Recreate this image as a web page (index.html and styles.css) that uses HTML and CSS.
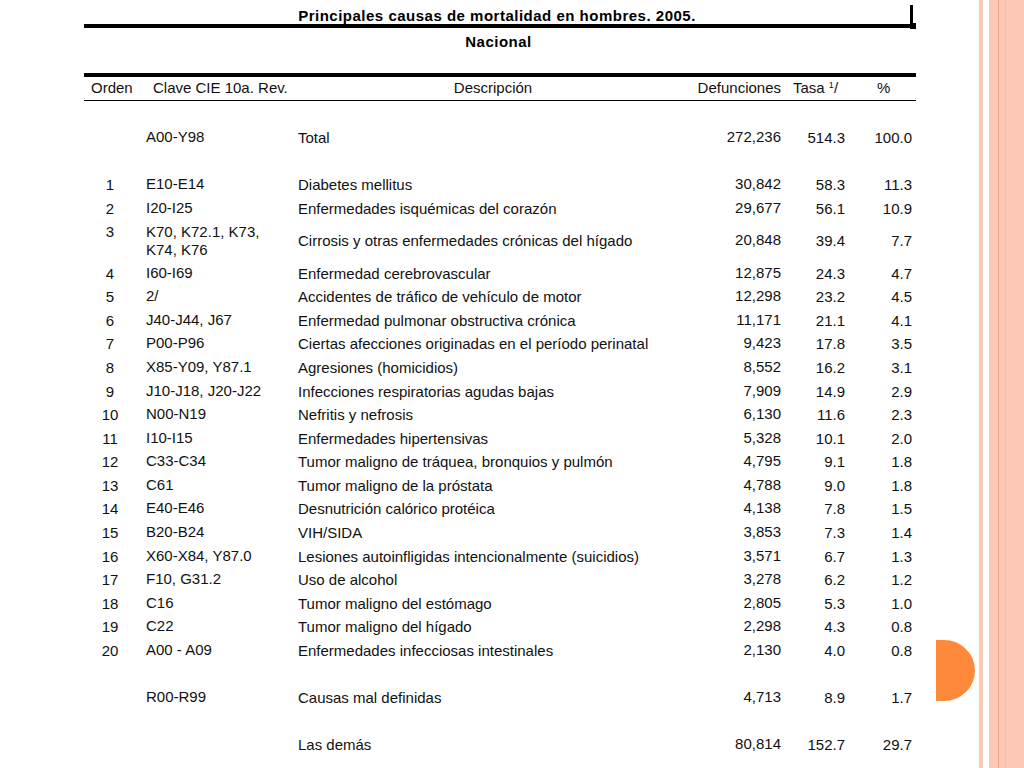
FILE: index.html
```html
<!DOCTYPE html>
<html lang="es">
<head>
<meta charset="utf-8">
<title>Principales causas de mortalidad en hombres. 2005.</title>
<link rel="stylesheet" href="styles.css">
</head>
<body>
<div class="page">
  <div class="sheet">
    <div class="title-bar">
      <div class="title">Principales causas de mortalidad en hombres. 2005.</div>
      <div class="marker"><div class="marker-bar"></div><div class="marker-sq"></div></div>
    </div>
    <div class="subtitle">Nacional</div>
    <div class="head">
      <div class="h-orden">Orden</div>
      <div class="h-clave">Clave CIE 10a. Rev.</div>
      <div class="h-desc">Descripción</div>
      <div class="h-def">Defunciones</div>
      <div class="h-tasa">Tasa <sup>1</sup>/</div>
      <div class="h-pct">%</div>
    </div>
    <div class="body">
      <div class="row"><div class="c-orden"></div><div class="c-clave">A00-Y98</div><div class="c-desc">Total</div><div class="c-def">272,236</div><div class="c-tasa">514.3</div><div class="c-pct">100.0</div></div>
      <div class="gap"></div>
      <div class="row"><div class="c-orden">1</div><div class="c-clave">E10-E14</div><div class="c-desc">Diabetes mellitus</div><div class="c-def">30,842</div><div class="c-tasa">58.3</div><div class="c-pct">11.3</div></div>
      <div class="row"><div class="c-orden">2</div><div class="c-clave">I20-I25</div><div class="c-desc">Enfermedades isquémicas del corazón</div><div class="c-def">29,677</div><div class="c-tasa">56.1</div><div class="c-pct">10.9</div></div>
      <div class="row tall"><div class="c-orden top">3</div><div class="c-clave two">K70, K72.1, K73,<br>K74, K76</div><div class="c-desc">Cirrosis y otras enfermedades crónicas del hígado</div><div class="c-def">20,848</div><div class="c-tasa">39.4</div><div class="c-pct">7.7</div></div>
      <div class="row"><div class="c-orden">4</div><div class="c-clave">I60-I69</div><div class="c-desc">Enfermedad cerebrovascular</div><div class="c-def">12,875</div><div class="c-tasa">24.3</div><div class="c-pct">4.7</div></div>
      <div class="row"><div class="c-orden">5</div><div class="c-clave">2/</div><div class="c-desc">Accidentes de tráfico de vehículo de motor</div><div class="c-def">12,298</div><div class="c-tasa">23.2</div><div class="c-pct">4.5</div></div>
      <div class="row"><div class="c-orden">6</div><div class="c-clave">J40-J44, J67</div><div class="c-desc">Enfermedad pulmonar obstructiva crónica</div><div class="c-def">11,171</div><div class="c-tasa">21.1</div><div class="c-pct">4.1</div></div>
      <div class="row"><div class="c-orden">7</div><div class="c-clave">P00-P96</div><div class="c-desc">Ciertas afecciones originadas en el período perinatal</div><div class="c-def">9,423</div><div class="c-tasa">17.8</div><div class="c-pct">3.5</div></div>
      <div class="row"><div class="c-orden">8</div><div class="c-clave">X85-Y09, Y87.1</div><div class="c-desc">Agresiones (homicidios)</div><div class="c-def">8,552</div><div class="c-tasa">16.2</div><div class="c-pct">3.1</div></div>
      <div class="row"><div class="c-orden">9</div><div class="c-clave">J10-J18, J20-J22</div><div class="c-desc">Infecciones respiratorias agudas bajas</div><div class="c-def">7,909</div><div class="c-tasa">14.9</div><div class="c-pct">2.9</div></div>
      <div class="row"><div class="c-orden">10</div><div class="c-clave">N00-N19</div><div class="c-desc">Nefritis y nefrosis</div><div class="c-def">6,130</div><div class="c-tasa">11.6</div><div class="c-pct">2.3</div></div>
      <div class="row"><div class="c-orden">11</div><div class="c-clave">I10-I15</div><div class="c-desc">Enfermedades hipertensivas</div><div class="c-def">5,328</div><div class="c-tasa">10.1</div><div class="c-pct">2.0</div></div>
      <div class="row"><div class="c-orden">12</div><div class="c-clave">C33-C34</div><div class="c-desc">Tumor maligno de tráquea, bronquios y pulmón</div><div class="c-def">4,795</div><div class="c-tasa">9.1</div><div class="c-pct">1.8</div></div>
      <div class="row"><div class="c-orden">13</div><div class="c-clave">C61</div><div class="c-desc">Tumor maligno de la próstata</div><div class="c-def">4,788</div><div class="c-tasa">9.0</div><div class="c-pct">1.8</div></div>
      <div class="row"><div class="c-orden">14</div><div class="c-clave">E40-E46</div><div class="c-desc">Desnutrición calórico protéica</div><div class="c-def">4,138</div><div class="c-tasa">7.8</div><div class="c-pct">1.5</div></div>
      <div class="row"><div class="c-orden">15</div><div class="c-clave">B20-B24</div><div class="c-desc">VIH/SIDA</div><div class="c-def">3,853</div><div class="c-tasa">7.3</div><div class="c-pct">1.4</div></div>
      <div class="row"><div class="c-orden">16</div><div class="c-clave">X60-X84, Y87.0</div><div class="c-desc">Lesiones autoinfligidas intencionalmente (suicidios)</div><div class="c-def">3,571</div><div class="c-tasa">6.7</div><div class="c-pct">1.3</div></div>
      <div class="row"><div class="c-orden">17</div><div class="c-clave">F10, G31.2</div><div class="c-desc">Uso de alcohol</div><div class="c-def">3,278</div><div class="c-tasa">6.2</div><div class="c-pct">1.2</div></div>
      <div class="row"><div class="c-orden">18</div><div class="c-clave">C16</div><div class="c-desc">Tumor maligno del estómago</div><div class="c-def">2,805</div><div class="c-tasa">5.3</div><div class="c-pct">1.0</div></div>
      <div class="row"><div class="c-orden">19</div><div class="c-clave">C22</div><div class="c-desc">Tumor maligno del hígado</div><div class="c-def">2,298</div><div class="c-tasa">4.3</div><div class="c-pct">0.8</div></div>
      <div class="row"><div class="c-orden">20</div><div class="c-clave">A00 - A09</div><div class="c-desc">Enfermedades infecciosas intestinales</div><div class="c-def">2,130</div><div class="c-tasa">4.0</div><div class="c-pct">0.8</div></div>
      <div class="gap"></div>
      <div class="row"><div class="c-orden"></div><div class="c-clave">R00-R99</div><div class="c-desc">Causas mal definidas</div><div class="c-def">4,713</div><div class="c-tasa">8.9</div><div class="c-pct">1.7</div></div>
      <div class="gap"></div>
      <div class="row"><div class="c-orden"></div><div class="c-clave"></div><div class="c-desc">Las demás</div><div class="c-def">80,814</div><div class="c-tasa">152.7</div><div class="c-pct">29.7</div></div>
    </div>
  </div>
</div>
<div class="deco"></div>
<div class="half-disc"></div>
</body>
</html>
```
FILE: styles.css
```css
html, body {
  margin: 0;
  padding: 0;
}
body {
  position: relative;
  width: 1024px;
  height: 768px;
  overflow: hidden;
  background: #fff;
  display: flex;
  font-family: "Liberation Sans", Arial, sans-serif;
  font-size: 15px;
  color: #111;
}
.page {
  width: 979px;
  flex: none;
}
.sheet {
  margin-left: 84px;
  width: 832px;
}
.title-bar {
  display: flex;
  align-items: flex-start;
}
.title {
  width: 829px;
  box-sizing: content-box;
  padding-top: 7px;
  height: 17px;
  line-height: 17px;
  border-bottom: 4px solid #000;
  font-weight: bold;
  letter-spacing: 0.5px;
  text-align: center;
  color: #000;
}
.marker {
  display: flex;
  flex-direction: column;
  padding-top: 5px;
}
.marker-bar {
  width: 3px;
  height: 18px;
  background: #000;
}
.marker-sq {
  width: 6px;
  height: 6px;
  background: #000;
}
.subtitle {
  width: 829px;
  height: 44px;
  box-sizing: border-box;
  padding-top: 4px;
  line-height: 17px;
  font-weight: bold;
  letter-spacing: 0.5px;
  text-align: center;
  color: #000;
}
.head {
  display: grid;
  grid-template-columns: 52px 162px 390px 93px 64px 67px;
  border-top: 4px solid #000;
  border-bottom: 1px solid #000;
  box-sizing: content-box;
  line-height: 17px;
  padding-top: 2px;
  height: 21px;
}
.head sup {
  font-size: 9px;
  line-height: 0;
  vertical-align: 5px;
}
.h-orden { padding-left: 7px; }
.h-clave { padding-left: 17px; }
.h-desc { text-align: center; }
.h-def { text-align: right; }
.h-tasa { padding-left: 12px; }
.h-pct { padding-left: 32px; }
.body {
  padding-top: 24.7px;
}
.row {
  display: grid;
  grid-template-columns: 52px 162px 390px 93px 64px 67px;
  height: 23.6px;
  align-items: center;
  line-height: 17px;
}
.row.tall {
  height: 41.2px;
}
.gap {
  height: 23.6px;
}
.c-orden { text-align: center; }
.c-orden.top { align-self: start; line-height: 18px; padding-top: 2.6px; }
.c-clave { padding-left: 10px; padding-bottom: 2px; }
.c-clave.two { line-height: 18px; padding-bottom: 0; }
.c-def { text-align: right; padding-bottom: 2px; }
.c-tasa { text-align: right; }
.c-pct { text-align: right; }
.deco {
  width: 45px;
  height: 768px;
  flex: none;
  background: linear-gradient(to right,
    #fcc9b6 0, #fcc9b6 4px,
    #ffffff 4px, #ffffff 10px,
    #fcc9b6 10px, #fcc9b6 19px,
    #f2a47f 19px, #f2a47f 20px,
    #fcc9b6 20px, #fcc9b6 26px,
    #f7bca6 26px, #f7bca6 27px,
    #fcc9b6 27px, #fcc9b6 45px);
}
.half-disc {
  position: absolute;
  left: 936px;
  top: 640px;
  width: 39px;
  height: 61px;
  background: #fd8a3a;
  border-radius: 0 31px 31px 0 / 0 30.5px 30.5px 0;
}
```
